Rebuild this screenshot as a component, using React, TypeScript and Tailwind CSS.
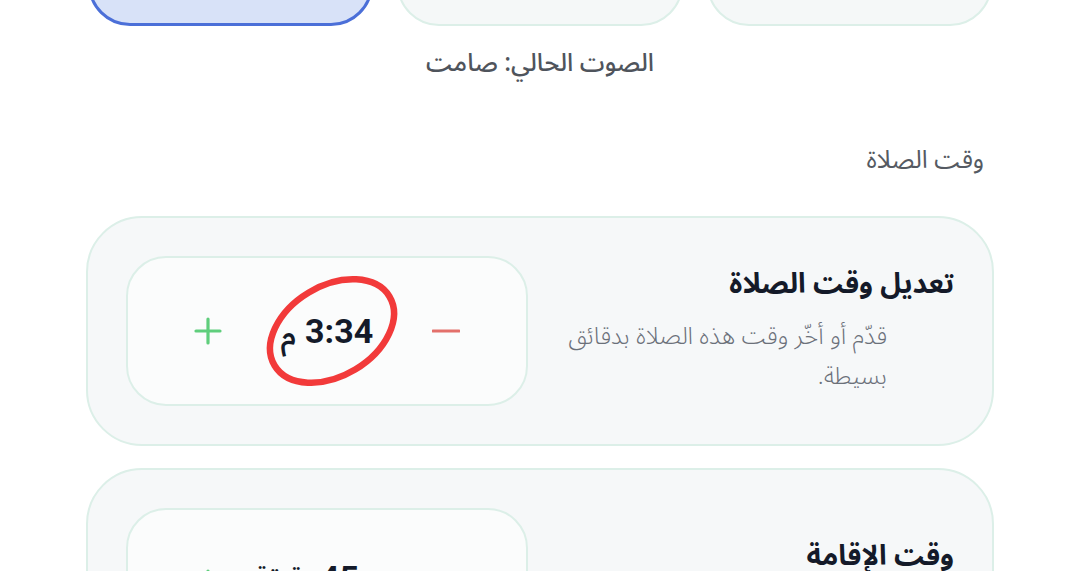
import React from "react";

const arabic = "font-['Noto_Sans_Arabic','Noto_Sans','DejaVu_Sans',sans-serif]";

function PlusIcon() {
  return (
    <svg width="28" height="28" viewBox="0 0 28 28" fill="none">
      <path d="M14 2v24M2 14h24" stroke="#5fce7c" strokeWidth="3.2" strokeLinecap="round" />
    </svg>
  );
}

function MinusIcon() {
  return (
    <svg width="28" height="28" viewBox="0 0 28 28" fill="none">
      <path d="M1 14h26" stroke="#e3706b" strokeWidth="3.2" strokeLinecap="round" />
    </svg>
  );
}

function Stepper({ children }: { children: React.ReactNode }) {
  return (
    <div className="w-[402px] h-[150px] shrink-0 rounded-[40px] border-2 border-[#dcefe8] bg-[#fbfcfc] flex items-center justify-between px-[66px]">
      <button className="w-[28px] h-[28px] flex items-center justify-center">
        <MinusIcon />
      </button>
      {children}
      <button className="w-[28px] h-[28px] flex items-center justify-center">
        <PlusIcon />
      </button>
    </div>
  );
}

function SettingCard({
  title,
  desc,
  children,
}: {
  title: string;
  desc: string;
  children: React.ReactNode;
}) {
  return (
    <div className="rounded-[56px] border-2 border-[#dcefe8] bg-[#f6f8f9] p-[38px] flex items-center justify-between">
      <div className="flex flex-col">
        <h3 className="text-[28px] leading-[40px] font-bold text-[#141a29]">{title}</h3>
        <p className="mt-[12px] mr-[67px] w-[340px] text-[24px] leading-[40px] font-light text-[#6b7079]">{desc}</p>
      </div>
      {children}
    </div>
  );
}

export default function App() {
  return (
    <div dir="rtl" className={`w-[1080px] h-[571px] overflow-hidden bg-white ${arabic}`}>
      <div className="px-[86px]">
        {/* sound option tiles */}
        <div className="mt-[-74px] grid grid-cols-3 gap-[24px] px-[2px]">
          <div className="h-[100px] rounded-[42px] border-2 border-[#dcefe8] bg-[#f5f8f8]" />
          <div className="h-[100px] rounded-[42px] border-2 border-[#dcefe8] bg-[#f5f8f8]" />
          <div className="h-[100px] rounded-[42px] border-[3px] border-[#4b6fd8] bg-[#d8e2f8]" />
        </div>

        <p className="mt-[20px] text-center text-[25px] leading-[34px] font-medium text-[#4f545c]">
          الصوت الحالي: صامت
        </p>

        <h2 className="mt-[63px] pr-[10px] text-[25px] leading-[34px] text-[#555a62]">وقت الصلاة</h2>

        <div className="mt-[39px] flex flex-col gap-[22px]">
          <SettingCard
            title="تعديل وقت الصلاة"
            desc="قدّم أو أخّر وقت هذه الصلاة بدقائق بسيطة."
          >
            <Stepper>
              <div className="relative flex items-center gap-[9px] text-[#141a29]">
                <span className="font-['Roboto','Liberation_Sans',sans-serif] text-[34px] font-bold leading-none" dir="ltr">
                  3:34
                </span>
                <span className="text-[29px] font-semibold leading-none mt-[8px]">م</span>
                <svg
                  className="absolute left-[calc(50%+5px)] top-1/2 -translate-x-1/2 -translate-y-1/2 pointer-events-none"
                  width="150"
                  height="120"
                  viewBox="0 0 150 120"
                  fill="none"
                >
                  <ellipse
                    cx="75"
                    cy="60"
                    rx="67"
                    ry="45"
                    transform="rotate(-31 75 60)"
                    stroke="#f23a3a"
                    strokeWidth="6.5"
                  />
                </svg>
              </div>
            </Stepper>
          </SettingCard>

          <SettingCard title="وقت الإقامة" desc="المدة بين الأذان والإقامة.">
            <Stepper>
              <div className="flex items-center gap-[6px] text-[#141a29] -mt-[10px]">
                <span className="text-[24px] font-semibold">بعد</span>
                <span className="font-['Roboto','Liberation_Sans',sans-serif] text-[34px] font-bold">45</span>
                <span className="text-[24px] font-semibold">دقيقة</span>
              </div>
            </Stepper>
          </SettingCard>
        </div>
      </div>
    </div>
  );
}
